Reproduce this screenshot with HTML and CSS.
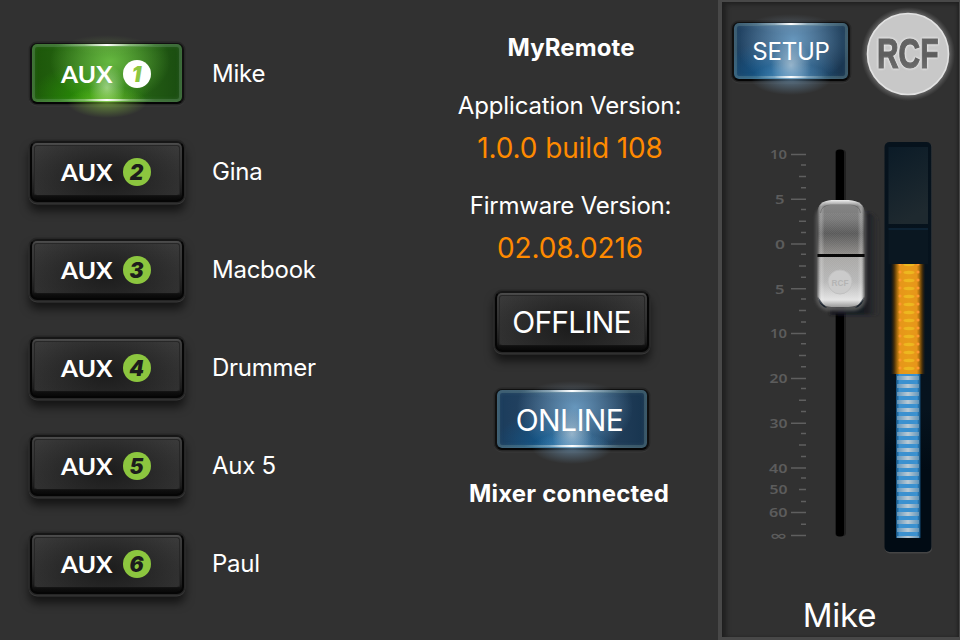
FILE: index.html
```html
<!DOCTYPE html>
<html lang="en">
<head>
<meta charset="utf-8">
<title>MyRemote</title>
<link rel="stylesheet" href="styles.css">
</head>
<body>
<main class="app">
  <section class="aux-list">
    <div class="aux-row"><button class="btn lit green"><svg class="aux-face" viewBox="0 0 154 60"><text class="aux-word" x="31" y="39" textLength="51.5" lengthAdjust="spacingAndGlyphs">AUX</text><circle class="disc" cx="107" cy="30" r="14"/><text class="num" x="106.5" y="38">1</text></svg></button><span class="name">Mike</span></div>
    <div class="aux-row"><button class="btn"><svg class="aux-face" viewBox="0 0 154 60"><text class="aux-word" x="31" y="39" textLength="51.5" lengthAdjust="spacingAndGlyphs">AUX</text><circle class="disc" cx="107" cy="30" r="14"/><text class="num" x="106.5" y="38">2</text></svg></button><span class="name">Gina</span></div>
    <div class="aux-row"><button class="btn"><svg class="aux-face" viewBox="0 0 154 60"><text class="aux-word" x="31" y="39" textLength="51.5" lengthAdjust="spacingAndGlyphs">AUX</text><circle class="disc" cx="107" cy="30" r="14"/><text class="num" x="106.5" y="38">3</text></svg></button><span class="name">Macbook</span></div>
    <div class="aux-row"><button class="btn"><svg class="aux-face" viewBox="0 0 154 60"><text class="aux-word" x="31" y="39" textLength="51.5" lengthAdjust="spacingAndGlyphs">AUX</text><circle class="disc" cx="107" cy="30" r="14"/><text class="num" x="106.5" y="38">4</text></svg></button><span class="name">Drummer</span></div>
    <div class="aux-row"><button class="btn"><svg class="aux-face" viewBox="0 0 154 60"><text class="aux-word" x="31" y="39" textLength="51.5" lengthAdjust="spacingAndGlyphs">AUX</text><circle class="disc" cx="107" cy="30" r="14"/><text class="num" x="106.5" y="38">5</text></svg></button><span class="name">Aux 5</span></div>
    <div class="aux-row"><button class="btn"><svg class="aux-face" viewBox="0 0 154 60"><text class="aux-word" x="31" y="39" textLength="51.5" lengthAdjust="spacingAndGlyphs">AUX</text><circle class="disc" cx="107" cy="30" r="14"/><text class="num" x="106.5" y="38">6</text></svg></button><span class="name">Paul</span></div>
  </section>

  <section class="info">
    <h1 class="title">MyRemote</h1>
    <p class="label app-label">Application Version:</p>
    <p class="value app-value">1.0.0 build 108</p>
    <p class="label fw-label">Firmware Version:</p>
    <p class="value fw-value">02.08.0216</p>
    <button class="btn offline"><span>OFFLINE</span></button>
    <button class="btn lit blue online"><span>ONLINE</span></button>
    <p class="status">Mixer connected</p>
  </section>

  <aside class="strip">
    <header class="strip-head">
      <button class="btn lit blue setup"><span>SETUP</span></button>
      <svg class="logo" width="96" height="96" viewBox="0 0 96 96">
        <defs>
          <radialGradient id="halo"><stop offset=".84" stop-color="#aaa" stop-opacity=".55"/><stop offset="1" stop-color="#888" stop-opacity="0"/></radialGradient>
          <linearGradient id="ink" x1="0" y1="0" x2="0" y2="1"><stop offset="0" stop-color="#666"/><stop offset=".55" stop-color="#5e5e5e"/><stop offset="1" stop-color="#747474"/></linearGradient>
        </defs>
        <circle cx="48" cy="48" r="47" fill="url(#halo)"/>
        <circle cx="48" cy="48" r="40.5" fill="#c8c8c8" stroke="#e2e2e2" stroke-width="1.6"/>
        <text class="logo-text" x="17" y="61.5" textLength="61.5" lengthAdjust="spacingAndGlyphs">RCF</text>
      </svg>
    </header>
    <div class="controls">
      <svg class="fader" width="132" height="420" viewBox="752 138 132 420">
        <defs>
          <linearGradient id="capTop" x1="0" y1="0" x2="0" y2="1"><stop offset="0" stop-color="#f0f0f0"/><stop offset=".06" stop-color="#bbb"/><stop offset=".12" stop-color="#848484"/><stop offset=".35" stop-color="#7a7a7a"/><stop offset=".62" stop-color="#5a5a5a"/><stop offset="1" stop-color="#8d8b88"/></linearGradient>
          <linearGradient id="capLow" x1="0" y1="0" x2="0" y2="1"><stop offset="0" stop-color="#a9a8a6"/><stop offset=".5" stop-color="#b8b8b8"/><stop offset=".86" stop-color="#e4e4e4"/><stop offset="1" stop-color="#999"/></linearGradient>
          <linearGradient id="side"><stop offset="0" stop-color="#333" stop-opacity=".6"/><stop offset=".08" stop-color="#eee" stop-opacity=".25"/><stop offset=".15" stop-color="#fff" stop-opacity="0"/><stop offset=".85" stop-color="#fff" stop-opacity="0"/><stop offset=".92" stop-color="#eee" stop-opacity=".25"/><stop offset="1" stop-color="#333" stop-opacity=".7"/></linearGradient>
          <linearGradient id="cast"><stop offset="0" stop-color="#14171e"/><stop offset=".75" stop-color="#1a1d24"/><stop offset="1" stop-color="#292a2d" stop-opacity="0"/></linearGradient>
          <filter id="soft" x="-20%" y="-20%" width="140%" height="140%"><feGaussianBlur stdDeviation="1.5"/></filter>
          <pattern id="grain" width="2" height="2" patternUnits="userSpaceOnUse"><rect width="1" height="1" fill="#fff" opacity=".06"/><rect x="1" y="1" width="1" height="1" fill="#fff" opacity=".06"/></pattern>
        </defs>
        <path class="ticks" d="M791 154.5h15M791 199.3h15M791 244h15M791 288.8h15M791 333.5h15M791 378.4h15M791 423.2h15M791 467.9h15M791 512.6h15M791 535.6h15"/>
        <path class="ticks" d="M799 176.5h7M799 221.3h7M799 266h7M799 310.5h7M799 355.4h7M799 400.2h7M799 445h7M799 489.6h7"/>
        <path class="ticks" d="M801 165h5M801 187.8h5M801 209.6h5M801 232.5h5M801 254.3h5M801 277.3h5M801 299h5M801 322h5M801 343.8h5M801 366.8h5M801 388.6h5M801 411.6h5M801 433.4h5M801 456.4h5M801 478h5M801 501.4h5M801 524.2h5"/>
        <g class="scale">
          <text x="770" y="159" textLength="17" lengthAdjust="spacingAndGlyphs">10</text>
          <text x="775" y="204" textLength="9.5" lengthAdjust="spacingAndGlyphs">5</text>
          <text x="775" y="248.5" textLength="10" lengthAdjust="spacingAndGlyphs">0</text>
          <text x="775" y="293.5" textLength="9.5" lengthAdjust="spacingAndGlyphs">5</text>
          <text x="770" y="338" textLength="17" lengthAdjust="spacingAndGlyphs">10</text>
          <text x="769.5" y="383" textLength="18" lengthAdjust="spacingAndGlyphs">20</text>
          <text x="769.5" y="427.5" textLength="18" lengthAdjust="spacingAndGlyphs">30</text>
          <text x="769" y="472.5" textLength="18.5" lengthAdjust="spacingAndGlyphs">40</text>
          <text x="769.5" y="494" textLength="18" lengthAdjust="spacingAndGlyphs">50</text>
          <text x="769" y="517" textLength="18.5" lengthAdjust="spacingAndGlyphs">60</text>
          <text x="769.5" y="540" textLength="18" lengthAdjust="spacingAndGlyphs">∞</text>
        </g>
        <rect x="835" y="150" width="11" height="386" rx="3" fill="#202020"/>
        <rect x="836" y="149.5" width="8" height="387" rx="3" fill="#000"/>
        <path d="M860 213h10q9 2 10 14v88h-50v-8h31z" fill="url(#cast)" filter="url(#soft)"/>
        <rect x="815.5" y="204" width="51" height="107" rx="14" fill="#666" opacity=".7" filter="url(#soft)"/>
        <path d="M817.5 254v-41q0-12 14-13h17q16 1 16 13v41z" fill="url(#capTop)"/>
        <path d="M817.5 257v37q0 12 14 13h17q16-1 16-13v-37z" fill="url(#capLow)"/>
        <path d="M818 297q1 9 9 11l-4-4zM864 297q-1 9-9 11l4-4z" fill="#17202b"/>
        <path d="M817.5 294v-81q0-12 14-13h17q16 1 16 13v81q0 12-16 13h-17q-14-1-14-13z" fill="url(#side)"/>
        <path d="M819 213h44v86h-44z" fill="url(#grain)"/>
        <path d="M820.5 213q1-8 10-8h20q9 0 10 8" fill="none" stroke="#555" stroke-opacity=".5"/>
        <rect x="817.5" y="254" width="47" height="3" fill="#080808"/>
        <circle cx="840" cy="282" r="12" fill="#cbcbcb" stroke="#c0c0c0"/>
        <text class="cap-logo" x="831.5" y="285.5" textLength="17" lengthAdjust="spacingAndGlyphs">RCF</text>
      </svg>
      <svg class="meter" width="50" height="414" viewBox="884 140 50 414">
        <defs>
          <linearGradient id="pane" x1="0" y1="0" x2=".3" y2="1"><stop offset="0" stop-color="#0b1b27"/><stop offset="1" stop-color="#1e292f"/></linearGradient>
          <linearGradient id="case" x1="0" y1="0" x2="0" y2="1"><stop offset="0" stop-color="#06121c"/><stop offset=".65" stop-color="#06131e"/><stop offset=".8" stop-color="#010b14"/></linearGradient>
          <linearGradient id="amber"><stop offset="0" stop-color="#301f0a" stop-opacity=".1"/><stop offset=".1" stop-color="#4f3409"/><stop offset=".2" stop-color="#b8760f"/><stop offset=".26" stop-color="#e7951a"/><stop offset=".5" stop-color="#e79c18"/><stop offset=".76" stop-color="#e7951a"/><stop offset=".82" stop-color="#b8760f"/><stop offset=".91" stop-color="#4f3409"/><stop offset="1" stop-color="#301f0a" stop-opacity=".1"/></linearGradient>
          <linearGradient id="azure"><stop offset="0" stop-color="#124b76"/><stop offset=".14" stop-color="#3b91d0"/><stop offset=".86" stop-color="#3b91d0"/><stop offset="1" stop-color="#124b76"/></linearGradient>
          <linearGradient id="bar"><stop offset="0" stop-color="#6897b9"/><stop offset=".5" stop-color="#c8d1d6"/><stop offset="1" stop-color="#6897b9"/></linearGradient>
          <pattern id="leds" x="898" y="268" width="22" height="8" patternUnits="userSpaceOnUse"><ellipse cx="11" cy="4.5" rx="5.5" ry="1.7" fill="#eec121" opacity=".75"/><circle cx="2" cy="4" r="1.5" fill="#ff9730"/><circle cx="20" cy="4" r="1.5" fill="#ff9730"/></pattern>
          <pattern id="bars" x="897" y="374" width="22" height="8" patternUnits="userSpaceOnUse"><rect x="0" y="2" width="22" height="4" fill="url(#bar)" opacity=".9"/></pattern>
        </defs>
        <rect x="885" y="142.5" width="47" height="411" rx="5" fill="#454545"/>
        <rect x="884.5" y="142" width="47" height="410" rx="5" fill="url(#case)"/>
        <rect x="888.5" y="147" width="39.5" height="77" fill="url(#pane)"/>
        <rect x="888.5" y="228" width="39.5" height="2" fill="#0d2233"/>
        <rect x="888.5" y="230" width="39.5" height="34" fill="#0a1721"/>
        <rect x="891" y="264" width="34" height="110" fill="url(#amber)"/>
        <rect x="898" y="264" width="22" height="110" fill="url(#leds)"/>
        <rect x="896" y="374" width="24.5" height="164" fill="url(#azure)"/>
        <rect x="897" y="374" width="22" height="164" fill="url(#bars)"/>
      </svg>
    </div>
    <p class="channel">Mike</p>
  </aside>
</main>
</body>
</html>
```
FILE: styles.css
```css
* { box-sizing: border-box; }
body { margin: 0; background: #313131; color: #fff; font-family: Inter, "Liberation Sans", sans-serif; }
h1, p { margin: 0; font-weight: 400; white-space: nowrap; }
.app { display: grid; grid-template-columns: 420px 298px 242px; width: 960px; height: 640px; overflow: hidden; }

/* push buttons */
.btn {
  position: relative; display: flex; align-items: center; justify-content: center;
  width: 154px; height: 61px; padding: 0; flex: none;
  border: 2px solid #050505; border-top-color: #161616; border-radius: 7px; color: #fff; font-family: inherit;
  background: linear-gradient(#4d4d4d, #3c3c3c 8%, #303030 50%, #1c1c1c 86%, #0e0e0e 94%, #080808);
  box-shadow: 0 0 0 1.5px #262626, 0 1px 0 1.5px #3a3a3a, 0 8px 10px 1px rgba(0,0,0,.6);
}
.btn::before {
  content: ""; position: absolute; inset: 2px 2px 4px; border-radius: 3px;
  border: 1.5px solid #272727; border-bottom-color: #141414;
  background: radial-gradient(ellipse 62% 100% at 50% 65%, #1c1c1c, rgba(28,28,28,0)), linear-gradient(#3a3a3a, #343434);
}
.btn > * { position: relative; }
.btn.lit { border-color: #101010; border-bottom-color: #050505; background: #101010; box-shadow: 0 0 0 1.5px #272727, 0 1px 0 1.5px #3a3a3a; }
.btn.lit::before { inset: -1px 0 0; border: 0; border-radius: 5px; box-shadow: inset 0 0 0 3px rgba(170,205,190,.17), inset 0 0 5px 2px rgba(170,205,190,.14); }
.btn.lit::after {
  content: ""; position: absolute; left: 12px; right: 12px; top: -16px; bottom: -22px;
  background:
    linear-gradient(90deg, transparent 12%, rgba(255,255,255,.25) 32%, #fff 50%, rgba(255,255,255,.25) 68%, transparent 88%) 50% 15px / 100% 2px no-repeat,
    linear-gradient(90deg, transparent 12%, rgba(255,255,255,.25) 32%, #fff 50%, rgba(255,255,255,.25) 68%, transparent 88%) 50% calc(100% - 23px) / 100% 2px no-repeat,
    radial-gradient(ellipse 40px 16px at 50% calc(100% - 22px), var(--glow), transparent),
    radial-gradient(ellipse 40px 10px at 50% 16px, var(--halo), transparent);
}
.green { --glow: rgba(150,220,70,.55); --halo: rgba(150,200,100,.18); }
.blue { --glow: rgba(130,180,220,.5); --halo: rgba(150,180,210,.22); }
.green::before {
  background: radial-gradient(ellipse 18px 24px at 50% 76%, rgba(190,230,170,.7), transparent),
    radial-gradient(ellipse 60px 42px at 52% 30%, #66b840, transparent),
    radial-gradient(ellipse 60px 34px at 40% 90%, #289203, transparent),
    linear-gradient(90deg, #1c5609, #2d6f18 50%, #1a4c10);
}
.blue::before {
  background: radial-gradient(ellipse 20px 26px at 50% 76%, rgba(200,215,225,.65), transparent),
    radial-gradient(ellipse 58px 46px at 52% 30%, #6797bd, transparent),
    radial-gradient(ellipse 60px 34px at 40% 90%, #0d5b94, transparent),
    linear-gradient(90deg, #1b3c5c, #2f4a66 50%, #17344f);
}

/* aux sends */
.aux-list { display: flex; flex-direction: column; gap: 37px; padding: 43px 0 0 30px; }
.aux-row { display: flex; align-items: center; gap: 28px; height: 61px; }
.aux-face { width: 154px; height: 60px; flex: none; display: block; z-index: 1; }
.aux-word { font: 700 22px Lato, sans-serif; fill: #fff; }
.num { font: italic 900 21px Inter, sans-serif; fill: #1c1c1c; text-anchor: middle; }
.disc { fill: #8cc63f; }
.green .disc { fill: #fff; }
.green .num { fill: #8cc63f; }
.name { font-size: 24px; line-height: 30px; letter-spacing: -.25px; padding-top: 1px; }

/* info column */
.info { display: flex; flex-direction: column; align-items: center; padding: 33px 0 0 5px; }
.title, .status { font-size: 24px; font-weight: 700; line-height: 30px; letter-spacing: .1px; }
.title { margin-right: 1px; }
.label { font-size: 24px; line-height: 30px; letter-spacing: -.15px; margin-right: 4px; }
.value { font-size: 28px; line-height: 34px; color: #ff8a00; letter-spacing: -.12px; margin-right: 3px; }
.app-label { margin-top: 28px; }
.app-value { margin-top: 9.5px; }
.fw-label { margin-top: 26.5px; letter-spacing: -.22px; margin-right: 2px; }
.fw-value { margin-top: 9.5px; }
.info .btn { font-size: 30px; font-weight: 370; }
.info .btn span { z-index: 1; letter-spacing: -.8px; }
.offline { margin-top: 26.5px; }
.online { margin-top: 37px; }
.info .online span { left: -2px; letter-spacing: -.6px; }
.status { margin-top: 29px; letter-spacing: .2px; margin-right: 5px; }

/* channel strip */
.strip {
  border: solid #484848; border-width: 2px 1px 3px 4px;
  box-shadow: inset 5px 3px 5px -1px #1f1f1f, inset -2px 0 3px #252525;
}
.strip-head { display: flex; align-items: flex-start; padding: 4px 0 0 10px; height: 104px; }
.setup { width: 118px; height: 59px; margin-top: 16px; font-size: 24px; font-weight: 370; }
.setup span { z-index: 1; letter-spacing: -.2px; }
.logo { margin-left: 10px; flex: none; }
.logo-text { font: 700 42px "Liberation Sans", sans-serif; fill: url(#ink); stroke: url(#ink); stroke-width: 1.2; filter: drop-shadow(0 0 1px #f4f4f4) drop-shadow(0 0 1px #ddd); }
.controls { display: flex; align-items: flex-start; padding: 32px 0 0 30px; height: 452px; }
.meter { margin-top: 2px; }
.ticks { stroke: #5f5f5f; stroke-width: 1.5; fill: none; }
.scale { font: 600 12.5px "Noto Sans", "DejaVu Sans", sans-serif; fill: #5c5c5c; }
.cap-logo { font: 700 9px "Liberation Sans", sans-serif; fill: #b4b4b4; }
.channel { font-size: 33px; line-height: 40px; font-weight: 370; text-align: center; margin-top: 37px; letter-spacing: -.2px; padding-right: 2px; }
```
